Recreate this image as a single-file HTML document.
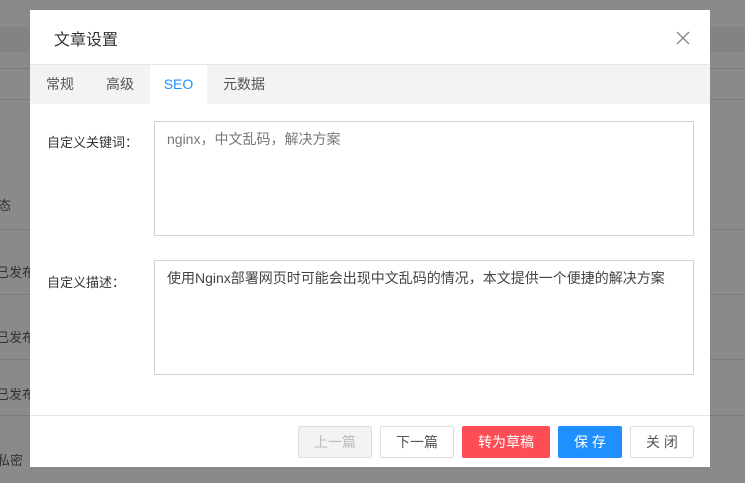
<!DOCTYPE html>
<html><head><meta charset="utf-8"><style>
*{box-sizing:border-box;margin:0;padding:0}
body{width:745px;height:483px;overflow:hidden;background:#8a8a8a;font-family:"Liberation Sans","Noto Sans CJK SC",sans-serif;position:relative}
.ln{position:absolute;left:0;right:0;height:1px;background:#7b7b7b}
.bg{position:absolute;left:0;font-size:13px;color:#333}
.modal{position:absolute;left:30px;top:10px;width:680px;height:457px;background:#fff}
.title{position:absolute;left:24px;top:16px;font-size:16px;color:#333}
.x{position:absolute;left:646px;top:21px}
.tabs{position:absolute;left:0;right:0;top:54px;height:40px;background:#f3f3f3;border-top:1px solid #e6e6e6}
.tab{position:absolute;top:0;height:39px;line-height:38px;font-size:14px;color:#555;text-align:center}
.lbl{position:absolute;left:17px;font-size:13px;color:#333}
.ta{position:absolute;left:124px;width:540px;height:115px;border:1px solid #c9d2da;padding:7px 12px;font-size:14px;color:#777}
.foot{position:absolute;left:0;right:0;top:405px;border-top:1px solid #e6e6e6}
.btn{position:absolute;top:416px;height:32px;line-height:30px;text-align:center;font-size:14px;border:1px solid #ddd;border-radius:2px;color:#555;background:#fff}
</style></head><body>
<div class="ln" style="top:27px;height:25px;background:#838383"></div>
<div class="ln" style="top:68px"></div>
<div class="ln" style="top:99px"></div>
<div class="ln" style="top:229px"></div>
<div class="ln" style="top:294px"></div>
<div class="ln" style="top:359px"></div>
<div class="ln" style="top:415px"></div>
<div class="bg" style="top:195px;left:-2px">态</div>
<div class="bg" style="top:262px;left:-4px">已发布</div>
<div class="bg" style="top:327px;left:-4px">已发布</div>
<div class="bg" style="top:384px;left:-4px">已发布</div>
<div class="bg" style="top:450px;left:-3px">私密</div>
<div class="modal">
<div class="title">文章设置</div>
<svg class="x" width="14" height="14" viewBox="0 0 14 14"><path d="M1 1L13 13M13 1L1 13" stroke="#888" stroke-width="1.4"/></svg>
<div class="tabs">
<div class="tab" style="left:0;width:60px">常规</div>
<div class="tab" style="left:60px;width:60px">高级</div>
<div class="tab" style="left:120px;width:57px;background:#fff;color:#1e90ff;height:40px">SEO</div>
<div class="tab" style="left:177px;width:74px">元数据</div>
</div>
<div class="lbl" style="top:122px">自定义关键词：</div>
<div class="ta" style="top:111px">nginx，中文乱码，解决方案</div>
<div class="lbl" style="top:262px">自定义描述：</div>
<div class="ta" style="top:250px;color:#444">使用Nginx部署网页时可能会出现中文乱码的情况，本文提供一个便捷的解决方案</div>
<div class="foot"></div>
<div class="btn" style="left:268px;width:74px;background:#f3f3f3;color:#bbb">上一篇</div>
<div class="btn" style="left:350px;width:74px">下一篇</div>
<div class="btn" style="left:432px;width:88px;background:#ff4d55;border-color:#ff4d55;color:#fff">转为草稿</div>
<div class="btn" style="left:528px;width:64px;background:#1e90ff;border-color:#1e90ff;color:#fff">保 存</div>
<div class="btn" style="left:600px;width:64px">关 闭</div>
</div>
</body></html>
